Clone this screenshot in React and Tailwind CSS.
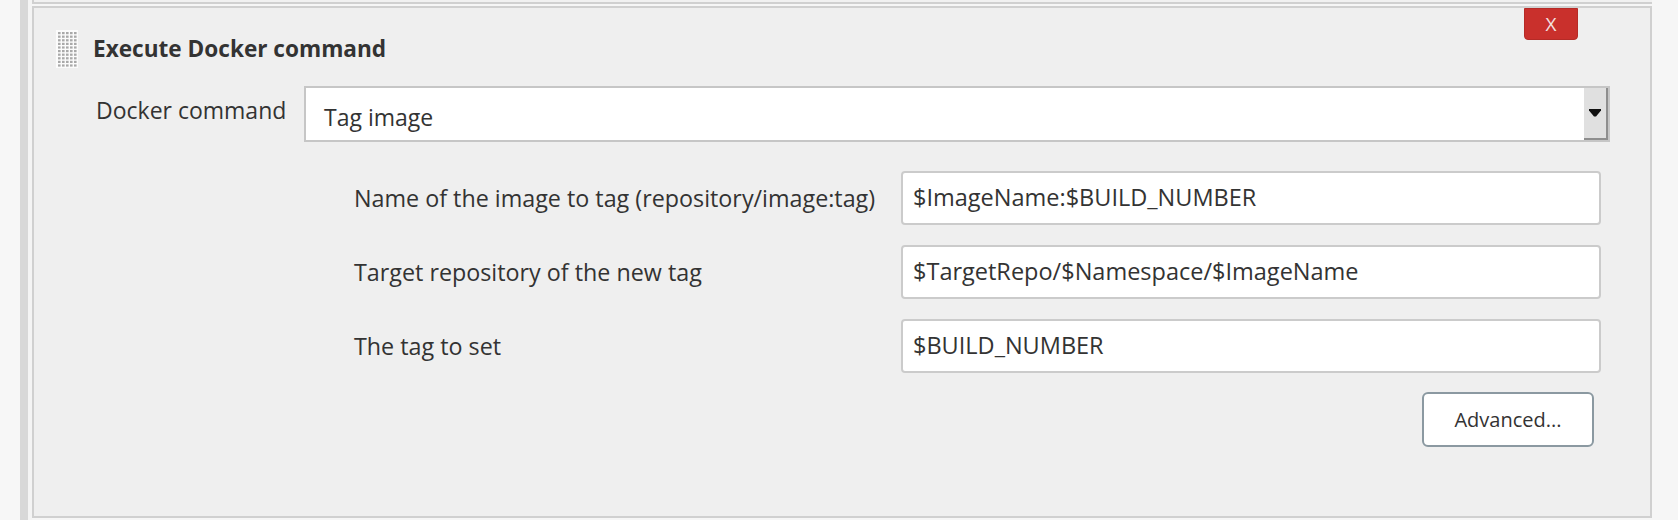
import React from "react";

function GripIcon() {
  const dots = [];
  for (let r = 0; r < 10; r++) {
    for (let c = 0; c < 5; c++) {
      dots.push(
        <rect key={`${r}-${c}`} x={2 + c * 4} y={2 + r * 3.6} width="2.6" height="2.2" fill="#a9a9a9" />
      );
    }
  }
  return (
    <svg width="22" height="38" viewBox="0 0 22 38" className="shrink-0">
      <rect x="0" y="0" width="22" height="38" fill="#fbfbfb" />
      {dots}
    </svg>
  );
}

function Field({ label, value }) {
  return (
    <div className="flex items-center h-[54px]">
      <div className="w-[547px] shrink-0 text-[23.3px] text-[#333]">{label}</div>
      <div className="flex-1 h-full flex items-center bg-white border-2 border-[#cbcbcb] rounded-[4px] pl-[10px] text-[23.5px] text-[#333]">
        {value}
      </div>
    </div>
  );
}

export default function App() {
  return (
    <div
      className="w-[1678px] h-[520px] flex bg-[#f6f6f6] overflow-hidden"
      style={{ fontFamily: '"Open Sans", "Noto Sans", sans-serif' }}
    >
      <div className="w-[20px] shrink-0 bg-[#f7f7f7]" />
      <div className="w-[8px] shrink-0 bg-[#d8d8d8]" />
      <div className="w-[4px] shrink-0 bg-[#f4f4f4]" />
      <div className="w-[1620px] shrink-0 flex flex-col">
        <div className="h-[4px] border-l-2 border-b-2 border-[#d0d0d0] bg-[#f1f1f1]" />
        <div className="h-[2px]" />
        <div className="relative h-[512px] border-2 border-[#d0d0d0] bg-[#efefef] flex flex-col">
          <div className="absolute top-0 right-[72px] w-[54px] h-[32px] bg-[#c9302c] border border-[#b52b27] rounded-b-[4px] flex items-center justify-center text-[#f3e1e0] text-[19px] leading-none">
            X
          </div>

          <div className="flex items-center gap-[15px] pl-[22px] pt-[22px] h-[38px] box-content">
            <GripIcon />
            <span className="text-[22.6px] font-bold text-[#333] leading-none">Execute Docker command</span>
          </div>

          <div className="flex items-center pl-[62px] pr-[40px] mt-[18px]">
            <div className="w-[208px] shrink-0 text-[23px] text-[#333] mb-[7px]">Docker command</div>
            <div className="flex-1 h-[56px] flex border-2 border-[#c6c6c6] bg-white">
              <div className="flex-1 flex items-center pl-[18px] pt-[6px] text-[23px] text-[#333]">Tag image</div>
              <div className="w-[24px] bg-[#e0e0e0] border-r-2 border-b-2 border-[#8e8e8e] flex items-center justify-center">
                <svg width="12" height="8" viewBox="0 0 12 8">
                  <path d="M0 0 H12 V1.5 L7 7.5 H5 L0 1.5 Z" fill="#111" />
                </svg>
              </div>
            </div>
          </div>

          <div className="flex flex-col gap-[20px] pl-[320px] pr-[49px] mt-[29px]">
            <Field label="Name of the image to tag (repository/image:tag)" value="$ImageName:$BUILD_NUMBER" />
            <Field label="Target repository of the new tag" value="$TargetRepo/$Namespace/$ImageName" />
            <Field label="The tag to set" value="$BUILD_NUMBER" />
          </div>

          <div className="flex justify-end pr-[56px] mt-[19px]">
            <div className="w-[172px] h-[55px] bg-white border-2 border-[#8b99a1] rounded-[6px] flex items-center justify-center text-[20px] text-[#333]">
              Advanced...
            </div>
          </div>
        </div>
      </div>
    </div>
  );
}
